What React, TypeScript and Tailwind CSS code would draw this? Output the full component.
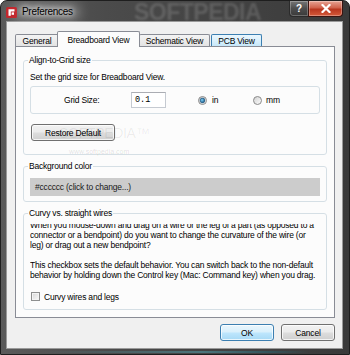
import { useId } from "react";

const FONT = "font-['Liberation_Sans',Arial,sans-serif]";
const TXT = "text-[8.5px] leading-[10px] tracking-[-0.2px]";

const BTN =
  "border-[#707070] bg-[linear-gradient(180deg,#f2f2f2_0%,#ebebeb_48%,#dddddd_52%,#cfcfcf_100%)]";
const BTN_DEFAULT =
  "border-[#3c7fb1] bg-[linear-gradient(180deg,#eaf6fd_0%,#d9f0fc_48%,#bee6fd_52%,#a7d9f5_100%)]";

function Radio({ checked = false }: { checked?: boolean }) {
  const id = useId().replace(/:/g, "");
  return (
    <svg width="9" height="9" viewBox="0 0 9 9" className="shrink-0">
      <defs>
        <linearGradient id={`${id}f`} x1="0" y1="0" x2="1" y2="1">
          <stop offset="0" stopColor="#cfcfcf" />
          <stop offset="1" stopColor="#ffffff" />
        </linearGradient>
        <radialGradient id={`${id}d`} cx="0.4" cy="0.4" r="0.65">
          <stop offset="0" stopColor="#7fd0f7" />
          <stop offset="1" stopColor="#0f4e7c" />
        </radialGradient>
      </defs>
      <circle cx="4.5" cy="4.5" r="4" fill={`url(#${id}f)`} stroke="#8b8b8b" strokeWidth="1" />
      {checked && <circle cx="4.5" cy="4.5" r="2.4" fill={`url(#${id}d)`} stroke="#1b4f78" strokeWidth="0.6" />}
    </svg>
  );
}

function WinButton({ children, className, primary }: { children: React.ReactNode; className?: string; primary?: boolean }) {
  return (
    <div
      className={`flex items-center justify-center rounded-[3px] border shadow-[inset_0_0_0_1px_rgba(255,255,255,0.75)] ${
        primary ? BTN_DEFAULT : BTN
      } ${className ?? ""}`}
    >
      {children}
    </div>
  );
}

function Group({ title, className, children }: { title: string; className?: string; children: React.ReactNode }) {
  return (
    <fieldset className={`rounded-[3px] border border-[#d5dfe5] px-[6px] ${className ?? ""}`}>
      <legend className="-ml-[2px] px-[1px]">{title}</legend>
      {children}
    </fieldset>
  );
}

function Tab({ label, className }: { label: string; className: string }) {
  return (
    <div className={`flex items-center justify-center rounded-t-[2px] border border-b-0 ${className}`}>
      {label}
    </div>
  );
}

function TitleBar() {
  return (
    <div className="relative flex h-[21px] items-start">
      {/* glow behind the caption */}
      <div className="absolute left-[10px] top-[2px] h-[18px] w-[70px] rounded-full bg-white/25 blur-[6px]" />
      <svg width="11" height="11" viewBox="0 0 11 11" className="relative ml-[5px] mt-[6px]">
        <rect x="0" y="0" width="11" height="11" rx="1.5" fill="#c2282e" />
        <path d="M2.5 2.2h6v2.2H4.8v4.4H2.5z" fill="#fff" />
        <rect x="5.6" y="5.4" width="2.4" height="2.4" fill="#fff" />
      </svg>
      <span className="relative ml-[5px] mt-[5px] text-[10px] leading-[12px] tracking-[-0.3px] text-black [text-shadow:0_0_5px_#fff,0_0_8px_#fff]">
        Preferences
      </span>

      {/* watermark */}
      <span className="pointer-events-none absolute left-[133px] top-[-6px] text-[23px] font-bold tracking-[-0.5px] text-white/15 blur-[0.8px]">
        SOFTPEDIA
      </span>

      <div className="relative ml-auto mr-[6px] flex">
        <div className="flex h-[16px] w-[20px] items-center justify-center rounded-bl-[4px] border border-t-0 border-[#2b2b2b] bg-[linear-gradient(180deg,#777_0%,#4d4d4d_50%,#3a3a3a_100%)] text-[10px] font-bold leading-none text-white shadow-[inset_0_0_0_1px_rgba(255,255,255,0.25)]">
          ?
        </div>
        <div className="-ml-px flex h-[16px] w-[35px] items-center justify-center rounded-br-[4px] border border-t-0 border-[#3a1410] bg-[linear-gradient(180deg,#e7a495_0%,#d0624c_45%,#b8361f_55%,#d45a3a_100%)] shadow-[inset_0_0_0_1px_rgba(255,255,255,0.3)]">
          <svg width="10" height="9" viewBox="0 0 10 9">
            <path d="M1.5 1 L8.5 8 M8.5 1 L1.5 8" stroke="#fff" strokeWidth="2.2" strokeLinecap="square" />
          </svg>
        </div>
      </div>
    </div>
  );
}

export default function App() {
  return (
    <div
      className={`relative h-[355px] w-[350px] overflow-hidden rounded-t-[7px] border border-[#1e1e1e] bg-[linear-gradient(90deg,#5a5a5a_0%,#4b4b4b_30%,#3a3a3a_100%)] ${FONT} text-black`}
    >
      <TitleBar />

      <div
        className={`ml-[6px] h-[326px] w-[335px] bg-[#f0f0f0] pl-[8px] pr-[7px] pt-[9px] shadow-[0_0_0_1px_#9a9a9a] ${TXT}`}
      >
        {/* tabs */}
        <div className="flex h-[16px] items-end">
          <Tab label="General" className="h-[13px] w-[44px] border-[#898c95] bg-[linear-gradient(180deg,#f4f4f4_0%,#e2e2e2_100%)]" />
          <div className="relative z-10 -ml-[2px] flex h-[16px] w-[83px] justify-center rounded-t-[2px] border border-b-0 border-[#898c95] bg-[#fcfcfc] pt-[3px]">
            Breadboard View
          </div>
          <Tab label="Schematic View" className="-ml-px h-[13px] w-[71px] border-[#898c95] bg-[linear-gradient(180deg,#f4f4f4_0%,#e2e2e2_100%)]" />
          <Tab label="PCB View" className="ml-px h-[13px] w-[51px] border-[#3c7fb1] bg-[linear-gradient(180deg,#eaf6fd_0%,#d9f0fc_50%,#c2e5f8_100%)]" />
        </div>

        {/* pane */}
        <div className="relative -mt-px h-[272px] border border-[#898c95] bg-[#fcfcfc] px-[7px] pt-[8px]">
          <Group title="Align-to-Grid size" className="pb-[13px]">
            <p className="pt-[7px]">Set the grid size for Breadboard View.</p>
            <div className="mt-[4px] flex h-[28px] items-center rounded-[3px] border border-[#d5dfe5] pl-[33px]">
              <span className="w-[67px]">Grid Size:</span>
              <div className="flex h-[16px] w-[35px] items-center border border-[#c5cad1] border-t-[#abadb3] bg-white pl-[3px] font-['Liberation_Mono',monospace] tracking-normal">
                0.1
              </div>
              <div className="ml-[32px] flex w-[55px] items-center gap-[5px]">
                <Radio checked />
                <span>in</span>
              </div>
              <div className="flex items-center gap-[4px]">
                <Radio />
                <span>mm</span>
              </div>
            </div>
            <WinButton className="ml-px mt-[10px] h-[17px] w-[84px]">Restore Default</WinButton>
          </Group>

          <Group title="Background color" className="mt-[6px] pb-[5px]">
            <div className="mt-[7px] flex h-[18px] items-center bg-[#cccccc] pl-[5px] text-[#1a1a1a]">
              #cccccc (click to change...)
            </div>
          </Group>

          <Group title="Curvy vs. straight wires" className="mt-[6px] pb-[8px]">
            <div className="mt-[6px] h-[56px] overflow-hidden">
              <div className="-mt-[4px] whitespace-nowrap">
                <p>When you mouse-down and drag on a wire or the leg of a part (as opposed to a</p>
                <p>connector or a bendpoint) do you want to change the curvature of the wire (or</p>
                <p>leg) or drag out a new bendpoint?</p>
                <p className="h-[10px]" />
                <p>This checkbox sets the default behavior. You can switch back to the non-default</p>
                <p>behavior by holding down the Control key (Mac: Command key) when you drag.</p>
              </div>
            </div>
            <div className="ml-px mt-[12px] flex h-[9px] items-center gap-[4px]">
              <div className="h-[9px] w-[9px] border border-[#8e8f8f] bg-[linear-gradient(135deg,#d6d6d6_0%,#fbfbfb_100%)] shadow-[inset_0_0_0_1px_#f4f4f4]" />
              <span>Curvy wires and legs</span>
            </div>
          </Group>
        </div>

        {/* dialog buttons */}
        <div className="mt-[6px] flex justify-end gap-[7px]">
          <WinButton primary className="h-[17px] w-[54px]">
            OK
          </WinButton>
          <WinButton className="h-[17px] w-[54px]">Cancel</WinButton>
        </div>
      </div>

      {/* bottom frame streak */}
      <div className="mx-[40px] mt-[3px] h-[2px] bg-[linear-gradient(90deg,transparent,#4f8a94_60%,#2d5c66_85%,transparent)] opacity-70" />

      {/* watermark over the first group */}
      <span className="pointer-events-none absolute left-[58px] top-[122px] text-[14px] tracking-[-0.3px] text-black/[0.07]">
        SOFTPEDIA™
      </span>
      <span className="pointer-events-none absolute left-[68px] top-[146px] text-[7px] text-black/[0.12]">
        www.softpedia.com
      </span>
    </div>
  );
}
